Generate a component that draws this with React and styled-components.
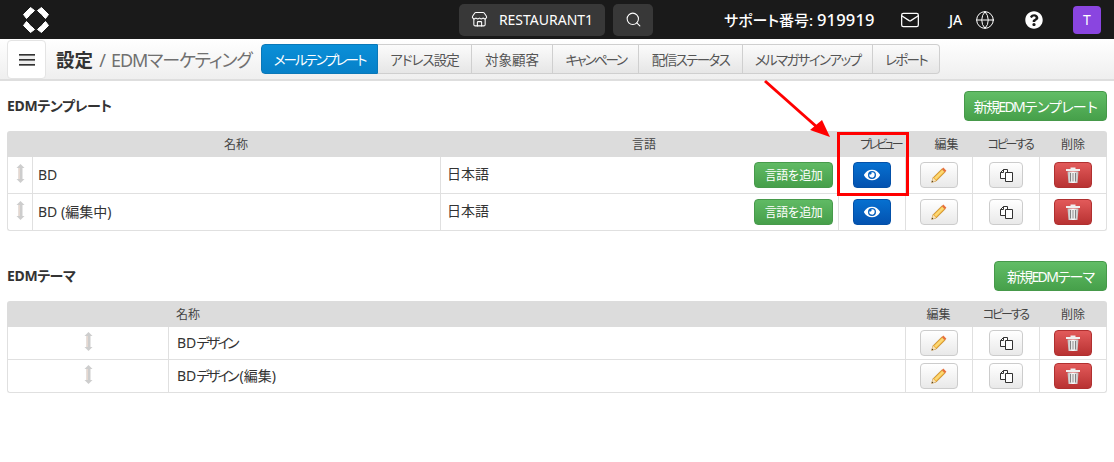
import React from "react";
import styled, { createGlobalStyle, css } from "styled-components";
import { Store, Search, Mail, Globe } from "lucide-react";
import { FaQuestionCircle, FaEye } from "react-icons/fa";

const FONT = `"Noto Sans", "Noto Sans CJK JP", sans-serif`;

const Global = createGlobalStyle`
  html, body { margin: 0; padding: 0; background: #fff; }
  body { font-family: ${FONT}; color: #333; font-size: 13px; font-feature-settings: "palt"; }
  button { font-feature-settings: "palt"; }
  * { box-sizing: border-box; }
`;

const Page = styled.div`
  position: relative;
  width: 1114px;
  height: 462px;
  overflow: hidden;
`;

const TopBar = styled.header`
  height: 39px;
  background: #1a1a1a;
  display: flex;
  align-items: center;
  color: #fff;
  padding: 0 0 0 22px;
  & > * { flex-shrink: 0; }
`;
const LogoMark = styled.svg`
  width: 28px;
  height: 28px;
  margin-right: 409px;
`;
const DarkButton = styled.button`
  height: 32px;
  border: 0;
  border-radius: 5px;
  background: #383838;
  color: #fff;
  font: 400 14px ${FONT};
  display: flex;
  align-items: center;
  padding: 0;
  justify-content: center;
`;
const StoreButton = styled(DarkButton)`
  width: 146px;
  gap: 11px;
  margin-right: 8px;
`;
const SearchButton = styled(DarkButton)`
  width: 40px;
  margin-right: 71px;
`;
const Support = styled.span`
  font-size: 15px;
  font-weight: 500;
  width: 150px;
  margin-right: 26px;
  white-space: nowrap;
`;
const Digits = styled.span`
  font-size: 16.5px;
  letter-spacing: 0.2px;
`;
const Lang = styled.span`
  font-size: 14px;
  font-weight: 500;
  width: 16px;
  margin: 0 10px 0 29px;
`;
const Avatar = styled.span`
  width: 28px;
  height: 28px;
  border-radius: 4px;
  background: #8a45e0;
  margin-left: 30px;
  display: flex;
  align-items: center;
  justify-content: center;
  font-size: 14px;
`;
const HelpWrap = styled.span`
  margin-left: 30px;
  display: flex;
`;

const SubBar = styled.div`
  height: 42px;
  background: linear-gradient(#fff, #efefef);
  border-bottom: 2px solid #dedede;
  display: flex;
  align-items: center;
  padding: 0 0 0 7px;
`;
const MenuButton = styled.button`
  width: 39px;
  height: 39px;
  flex-shrink: 0;
  margin: 1px 10px 0 0;
  border: 1px solid #e4e4e4;
  border-radius: 4px;
  background: #fff;
  display: flex;
  align-items: center;
  justify-content: center;
  padding: 0;
`;
const Burger = styled.span`
  display: block;
  width: 16px;
  height: 12px;
  background: repeating-linear-gradient(#333 0 1px, #777 1px 2px, #eee 2px 5px);
`;
const Title = styled.h1`
  margin: 0 10px 0 0;
  font-size: 18px;
  font-weight: 400;
  color: #707070;
  white-space: nowrap;
  width: 195px;
  flex-shrink: 0;
  letter-spacing: -1.05px;
  word-spacing: 2.5px;
  b { color: #333; font-weight: 700; font-size: 18.5px; letter-spacing: 0; }
`;
const Tabs = styled.nav`
  display: flex;
  height: 30px;
`;
const Tab = styled.span`
  width: ${p => p.$w}px;
  display: flex;
  align-items: center;
  justify-content: center;
  font-size: 13.5px;
  letter-spacing: ${p => p.$track}px;
  white-space: nowrap;
  color: #555;
  background: linear-gradient(#fbfbfb, #e6e6e6);
  border: 1px solid #cfcfcf;
  border-left-width: 0;
  &:first-child { border-radius: 4px 0 0 4px; border-left-width: 1px; }
  &:last-child { border-radius: 0 4px 4px 0; }
  ${p => p.$active && css`
    color: #fff;
    background: linear-gradient(#0a8fd8, #0680c8);
    border-color: #0a78b8;
  `}
`;

const Content = styled.main`
  padding: 10px 7px 0;
`;
const SectionHead = styled.div`
  display: flex;
  align-items: center;
  justify-content: space-between;
  height: 30px;
  margin-bottom: 10px;
`;
const SectionTitle = styled.h2`
  margin: 0 0 2px;
  font-size: 14px;
  font-weight: 700;
  color: #333;
  letter-spacing: -0.35px;
`;
const Action = styled.button`
  height: 30px;
  width: ${p => p.$w}px;
  border: 1px solid #46994a;
  border-radius: 4px;
  background: linear-gradient(#62bd66, #46a04a);
  color: #fff;
  font: 400 14px ${FONT};
  letter-spacing: -1.7px;
  padding: 0;
  white-space: nowrap;
`;

const Table = styled.table`
  width: 1100px;
  table-layout: fixed;
  border-collapse: separate;
  border-spacing: 0;
  margin-bottom: ${p => p.$gap || 0}px;
`;
const Th = styled.th`
  height: 26px;
  background: #dcdcdc;
  font-size: 12px;
  font-weight: 400;
  color: #444;
  padding: 0 0 0 ${p => p.$pl || 0}px;
  text-align: ${p => p.$align || "center"};
  letter-spacing: ${p => p.$track || 0}px;
  white-space: nowrap;
  &:first-child { border-top-left-radius: 3px; }
  &:last-child { border-top-right-radius: 3px; }
`;
const Td = styled.td`
  height: ${p => p.$h}px;
  padding: 0;
  border-bottom: 1px solid #e0e0e0;
  border-left: 1px solid #e0e0e0;
  text-align: center;
  &:last-child { border-right: 1px solid #e0e0e0; padding-right: 1px; }
  tr:last-child &:first-child { border-bottom-left-radius: 3px; }
  tr:last-child &:last-child { border-bottom-right-radius: 3px; }
`;
const TextCell = styled(Td)`
  text-align: left;
  padding: 0 0 ${p => p.$pb || 0}px ${p => p.$pl || 5}px;
  font-size: 14px;
  color: #333;
`;
const Tight = styled.span`
  letter-spacing: -2.7px;
  margin-right: 2.7px;
`;
const LangRow = styled.div`
  display: flex;
  justify-content: space-between;
  align-items: center;
  padding: 0 5px 0 6px;
  font-size: 14px;
`;
const LangName = styled.span`
  margin-bottom: 5px;
`;
const Mini = styled.button`
  height: 26px;
  border-radius: 4px;
  padding: 0;
  display: inline-flex;
  align-items: center;
  justify-content: center;
  vertical-align: middle;
  width: 38px;
`;
const AddBtn = styled(Mini)`
  width: 79px;
  border: 1px solid #479a4b;
  background: linear-gradient(#60ba64, #469f4a);
  color: #fff;
  font: 400 12px ${FONT};
  letter-spacing: -0.5px;
`;
const EyeBtn = styled(Mini)`
  border: 1px solid #0350a8;
  background: linear-gradient(#0670d0, #0352b0);
  color: #fff;
`;
const GrayBtn = styled(Mini)`
  border: 1px solid #ccc;
  background: linear-gradient(#fff, #e9e9e9);
`;
const CopyBtn = styled(GrayBtn)`
  width: 34px;
`;
const RedBtn = styled(Mini)`
  border: 1px solid #b03030;
  background: linear-gradient(#e25a5a, #b83232);
`;

const Highlight = styled.div`
  position: absolute;
  left: 837px;
  top: 132px;
  width: 72px;
  height: 64px;
  border: 3px solid #f00;
  pointer-events: none;
`;
const ArrowSvg = styled.svg`
  position: absolute;
  left: 760px;
  top: 76px;
  width: 80px;
  height: 70px;
  pointer-events: none;
`;

const Logo = () => (
  <LogoMark viewBox="-14 -14 28 28">
    {[[1, 1], [-1, 1], [1, -1], [-1, -1]].map(([sx, sy]) => (
      <path
        key={`${sx}${sy}`}
        transform={`scale(${sx} ${sy})`}
        d="M-5.5 -12.5 L-1.5 -9.5 L-4.5 -6.5 Q-6 -6 -6.5 -4.5 L-9.5 -1.5 L-12.5 -5.5 Z"
        fill="#fff"
        stroke="#fff"
        strokeWidth="1"
        strokeLinejoin="round"
      />
    ))}
  </LogoMark>
);

const Grip = () => (
  <svg width="9" height="19" viewBox="0 0 9 19">
    <path d="M4.5 0 L8.5 4 H6.5 V15 H8.5 L4.5 19 L0.5 15 H2.5 V4 H0.5 Z" fill="#cdcdcd" />
    <path d="M2.5 4 H4 V15 H2.5 Z" fill="#e6d8d0" />
  </svg>
);
const Pencil = () => (
  <svg width="16" height="16" viewBox="0 0 16 16">
    <path d="M0.7 15.3 L2 10.8 L10.8 2 L14 5.2 L5.2 14 Z" fill="#f3b63e" stroke="#b97e24" strokeWidth="0.7" />
    <path d="M3.4 10.8 L11.4 3 L13 4.6 L5 12.4 Z" fill="#fbd977" />
    <path d="M10.8 2 L12.3 0.6 L15.4 3.7 L14 5.2 Z" fill="#e8703a" />
    <path d="M0.7 15.3 L2 10.8 L5.2 14 Z" fill="#f6e2bd" />
    <path d="M0.7 15.3 L1.2 13.6 L2.4 14.8 Z" fill="#4a3a20" />
  </svg>
);
const CopyIcon = () => (
  <svg width="13" height="13" viewBox="0 0 13 13" fill="#fff" stroke="#333" strokeWidth="1">
    <path d="M0.5 3.5 L3.5 0.5 H7.5 V9.5 H0.5 Z" />
    <path d="M0.5 3.5 H3.5 V0.5" fill="none" />
    <path d="M5.5 3.5 H12.5 V12.5 H5.5 Z" />
  </svg>
);
const Trash = () => (
  <svg width="14" height="16" viewBox="0 0 14 16">
    <defs>
      <linearGradient id="tg" x1="0" x2="1" y1="0" y2="0">
        <stop offset="0" stopColor="#bbb" />
        <stop offset=".5" stopColor="#fff" />
        <stop offset="1" stopColor="#bbb" />
      </linearGradient>
    </defs>
    <path d="M0 2 H4.5 V0.5 H9.5 V2 H14 V4 H0 Z" fill="#f0f0f0" />
    <path d="M1.5 4.5 H12.5 L11.5 16 H2.5 Z" fill="url(#tg)" />
    <path d="M4.5 6 V14.5 M7 6 V14.5 M9.5 6 V14.5" stroke="#777" strokeWidth="0.9" />
  </svg>
);

const Tools = ({ h }) => (
  <>
    <Td $h={h}><GrayBtn><Pencil /></GrayBtn></Td>
    <Td $h={h}><CopyBtn><CopyIcon /></CopyBtn></Td>
    <Td $h={h}><RedBtn><Trash /></RedBtn></Td>
  </>
);

const tabs = [
  ["メールテンプレート", 117, -2, true],
  ["アドレス設定", 94, -1],
  ["対象顧客", 81, 0],
  ["キャンペーン", 86, -2.3],
  ["配信ステータス", 104, -1.6],
  ["メルマガサインアップ", 130, -1.6],
  ["レポート", 67, -1.75],
];

export default function App() {
  return (
    <Page>
      <Global />
      <TopBar>
        <Logo />
        <StoreButton><Store size={17} strokeWidth={1.5} />RESTAURANT1</StoreButton>
        <SearchButton><Search size={17} strokeWidth={1.5} /></SearchButton>
        <Support>サポート番号: <Digits>919919</Digits></Support>
        <Mail size={20} strokeWidth={1.5} />
        <Lang>JA</Lang>
        <Globe size={20} strokeWidth={1.2} />
        <HelpWrap><FaQuestionCircle size={18} /></HelpWrap>
        <Avatar>T</Avatar>
      </TopBar>
      <SubBar>
        <MenuButton><Burger /></MenuButton>
        <Title><b>設定</b> / EDMマーケティング</Title>
        <Tabs>
          {tabs.map(([t, w, tr, a]) => <Tab key={t} $w={w} $track={tr} $active={a}>{t}</Tab>)}
        </Tabs>
      </SubBar>
      <Content>
        <SectionHead>
          <SectionTitle>EDMテンプレート</SectionTitle>
          <Action $w={143}>新規EDMテンプレート</Action>
        </SectionHead>
        <Table $gap={30}>
          <colgroup>
            <col width="25" /><col width="408" /><col width="398" />
            <col width="67" /><col width="67" /><col width="67" /><col width="68" />
          </colgroup>
          <thead>
            <tr>
              <Th colSpan={2} $pl={25}>名称</Th>
              <Th $pl={10}>言語</Th>
              <Th $pl={18} $track={-2.8}>プレビュー</Th>
              <Th $pl={16}>編集</Th>
              <Th $pl={9} $track={-2.2}>コピーする</Th>
              <Th>削除</Th>
            </tr>
          </thead>
          <tbody>
            {["BD", "BD (編集中)"].map(n => (
              <tr key={n}>
                <Td $h={37}><Grip /></Td>
                <TextCell $h={37} $pb={2}>{n}</TextCell>
                <Td $h={37}>
                  <LangRow><LangName>日本語</LangName><AddBtn>言語を追加</AddBtn></LangRow>
                </Td>
                <Td $h={37}><EyeBtn><FaEye size={16} /></EyeBtn></Td>
                <Tools h={37} />
              </tr>
            ))}
          </tbody>
        </Table>
        <SectionHead>
          <SectionTitle>EDMテーマ</SectionTitle>
          <Action $w={113}>新規EDMテーマ</Action>
        </SectionHead>
        <Table>
          <colgroup>
            <col width="161" /><col width="737" />
            <col width="67" /><col width="67" /><col width="68" />
          </colgroup>
          <thead>
            <tr>
              <Th />
              <Th $align="left" $pl={8}>名称</Th>
              <Th>編集</Th>
              <Th $track={-2.2}>コピーする</Th>
              <Th>削除</Th>
            </tr>
          </thead>
          <tbody>
            {["", "(編集)"].map(s => (
              <tr key={s}>
                <Td $h={33}><Grip /></Td>
                <TextCell $h={33} $pb={3} $pl={8}>BD<Tight>デザイン</Tight>{s}</TextCell>
                <Tools h={33} />
              </tr>
            ))}
          </tbody>
        </Table>
      </Content>
      <Highlight />
      <ArrowSvg viewBox="0 0 80 70">
        <path d="M5 5 L58 52" stroke="#f00" strokeWidth="3" />
        <path d="M70 61 L50 54 L62 44 Z" fill="#f00" />
      </ArrowSvg>
    </Page>
  );
}
